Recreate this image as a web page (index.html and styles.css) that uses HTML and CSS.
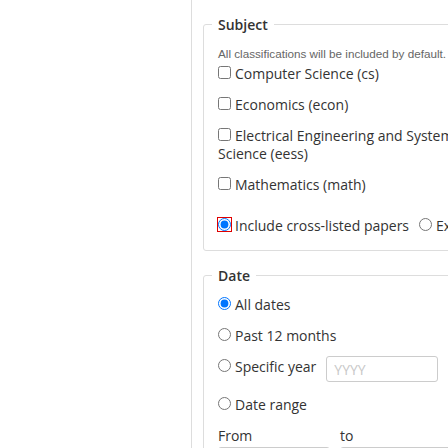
FILE: index.html
```html
<!DOCTYPE html>
<html lang="en">
<head>
<meta charset="utf-8">
<title>Advanced search</title>
<link rel="stylesheet" href="styles.css">
</head>
<body>
<div class="layout">
  <aside class="side"></aside>
  <main class="main">
    <fieldset class="group group-subject">
      <legend>Subject</legend>
      <p class="note">All classifications will be included by default.</p>
      <label class="opt"><input type="checkbox">Computer Science (cs)</label>
      <label class="opt"><input type="checkbox">Economics (econ)</label>
      <label class="opt"><input type="checkbox">Electrical Engineering and Systems Science (eess)</label>
      <label class="opt"><input type="checkbox">Mathematics (math)</label>
      <div class="scope">
        <label class="scope-opt"><input type="radio" name="cross" class="flagged" checked>Include cross-listed papers</label>
        <label class="scope-opt scope-opt-alt"><input type="radio" name="cross">Exclude cross-listed papers</label>
      </div>
    </fieldset>
    <fieldset class="group group-date">
      <legend>Date</legend>
      <div class="dates">
        <label class="opt"><input type="radio" name="date" checked>All dates</label>
        <label class="opt"><input type="radio" name="date">Past 12 months</label>
        <div class="opt year">
          <label><input type="radio" name="date">Specific year</label>
          <input type="text" class="field field-year" placeholder="YYYY">
        </div>
        <label class="opt"><input type="radio" name="date">Date range</label>
        <div class="range">
          <label class="range-col"><span class="range-label">From</span><input type="text" class="field"></label>
          <label class="range-col"><span class="range-label">to</span><input type="text" class="field"></label>
        </div>
      </div>
    </fieldset>
  </main>
</div>
</body>
</html>
```
FILE: styles.css
```css
html, body {
  margin: 0;
  padding: 0;
  overflow: hidden;
  background: #fff;
}

body {
  font-family: "Open Sans", "Noto Sans", sans-serif;
  font-size: 14px;
  color: #333;
}

.layout {
  display: flex;
  min-height: 448px;
}

.side {
  flex: none;
  width: 191px;
}

.main {
  flex: none;
  width: 290px;
  padding: 15px 11px 0;
  border-left: 1px solid #ddd;
}

.group {
  margin: 0 0 15px;
  padding: 0 14px 15px;
  border: 1px solid #ddd;
  border-radius: 3px;
  min-width: 0;
}

.group legend {
  margin-left: -6px;
  padding: 0 6px;
  font-size: 14px;
  font-weight: 600;
  line-height: 19px;
  color: #333;
}

.note {
  margin: 12px 0 3px;
  font-family: "Liberation Sans", Arial, sans-serif;
  font-size: 11.7px;
  line-height: 16px;
  color: #666;
}

.opt {
  display: block;
  line-height: 18px;
  margin-bottom: 13px;
}

.opt input[type="checkbox"],
.opt input[type="radio"],
.scope input[type="radio"] {
  width: 13px;
  height: 13px;
  margin: 1px 4px 0 0;
  vertical-align: top;
}

.scope {
  display: flex;
  margin-top: 23px;
  line-height: 18px;
  white-space: nowrap;
}

.scope-opt-alt {
  margin-left: 10px;
}

.flagged {
  outline: 1px solid #e00000;
  outline-offset: 0;
}

.dates {
  margin-top: 11px;
}

.year {
  display: flex;
  align-items: flex-start;
  margin-bottom: 14px;
}

.field {
  box-sizing: border-box;
  width: 112px;
  height: 26px;
  padding: 0 7px;
  border: 1px solid #ccc;
  border-radius: 3px;
  font-family: "Open Sans", "Noto Sans", sans-serif;
  font-size: 14px;
  color: #333;
  background: #fff;
}

.field::placeholder {
  color: #c8c8c8;
}

.field-year {
  margin: -2px 0 0 10px;
}

.range {
  display: flex;
  gap: 10px;
}

.range-col {
  display: flex;
  flex-direction: column;
  width: 112px;
}

.range-label {
  line-height: 18px;
}

.range-col .field {
  margin-top: 2px;
}
```
